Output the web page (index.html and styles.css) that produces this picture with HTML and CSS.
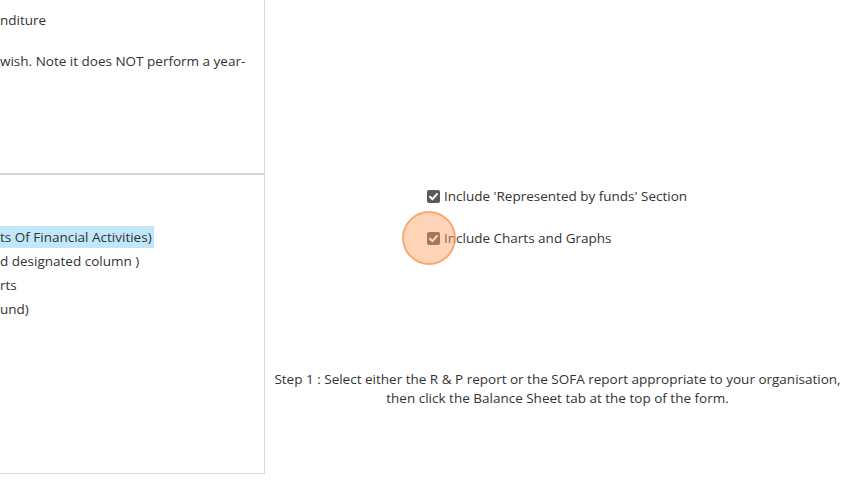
FILE: index.html
```html
<!DOCTYPE html>
<html>
<head>
<meta charset="utf-8">
<link rel="stylesheet" href="styles.css">
</head>
<body>
<div class="page">
  <div class="left">
    <div class="panel panel-top">
      <p class="line l1">nditure</p>
      <p class="line l2">wish. Note it does NOT perform a year-</p>
    </div>
    <div class="panel panel-bottom">
      <p class="row"><span class="hl">ts Of Financial Activities)</span></p>
      <p class="row">d designated column )</p>
      <p class="row">rts</p>
      <p class="row">und)</p>
    </div>
  </div>
  <div class="right">
    <div class="options">
      <label class="opt">
        <span class="box"><svg viewBox="0 0 13 13" width="13" height="13"><path d="M3 6.8 L5.5 9.2 L10 4" fill="none" stroke="#fff" stroke-width="2" stroke-linecap="round" stroke-linejoin="round"/></svg></span>
        <span>Include 'Represented by funds' Section</span>
      </label>
      <label class="opt">
        <span class="box focus"><svg viewBox="0 0 13 13" width="13" height="13"><path d="M3 6.8 L5.5 9.2 L10 4" fill="none" stroke="#fff" stroke-width="2" stroke-linecap="round" stroke-linejoin="round"/></svg><span class="ring"></span></span>
        <span>Include Charts and Graphs</span>
      </label>
    </div>
    <p class="step">Step 1 : Select either the R &amp; P report or the SOFA report appropriate to your organisation,<br>then click the Balance Sheet tab at the top of the form.</p>
  </div>
</div>
</body>
</html>
```
FILE: styles.css
```css
html, body {
  margin: 0;
  padding: 0;
  background: #fff;
}
body {
  font-family: "Open Sans", "Noto Sans", sans-serif;
  font-size: 13.5px;
  color: #333;
  width: 860px;
  height: 481px;
  overflow: hidden;
}
.page {
  display: flex;
  align-items: flex-start;
}
.left {
  width: 265px;
  flex: none;
  display: flex;
  flex-direction: column;
}
.panel {
  box-sizing: border-box;
  border-right: 1px solid #d6d6d6;
}
.panel-top {
  height: 174px;
  border-bottom: 1px solid #d6d6d6;
  padding-top: 10px;
}
.line {
  margin: 0;
  line-height: 20px;
  white-space: nowrap;
}
.l2 {
  margin-top: 21px;
}
.panel-bottom {
  height: 300px;
  border-top: 1px solid #d6d6d6;
  border-bottom: 1px solid #d6d6d6;
  padding-top: 50px;
}
.row {
  margin: 0;
  line-height: 24px;
  white-space: nowrap;
}
.hl {
  background: #c2e7fa;
  display: inline-block;
  line-height: 22px;
  padding-right: 2px;
}
.right {
  flex: 1;
  padding-right: 10px;
}
.options {
  padding-top: 186px;
  padding-left: 162px;
  display: flex;
  flex-direction: column;
  gap: 22px;
}
.opt {
  display: flex;
  align-items: center;
  gap: 4px;
  line-height: 20px;
}
.box {
  position: relative;
  width: 13px;
  height: 13px;
  background: #5a5a5a;
  border-radius: 2px;
  display: inline-flex;
}
.ring {
  position: absolute;
  left: -25px;
  top: -21px;
  width: 50px;
  height: 50px;
  border-radius: 50%;
  background: rgba(250, 160, 95, 0.45);
  border: 2px solid rgba(242, 160, 100, 0.8);
}
.step {
  margin: 122px 0 0;
  text-align: center;
  line-height: 19px;
}
```
